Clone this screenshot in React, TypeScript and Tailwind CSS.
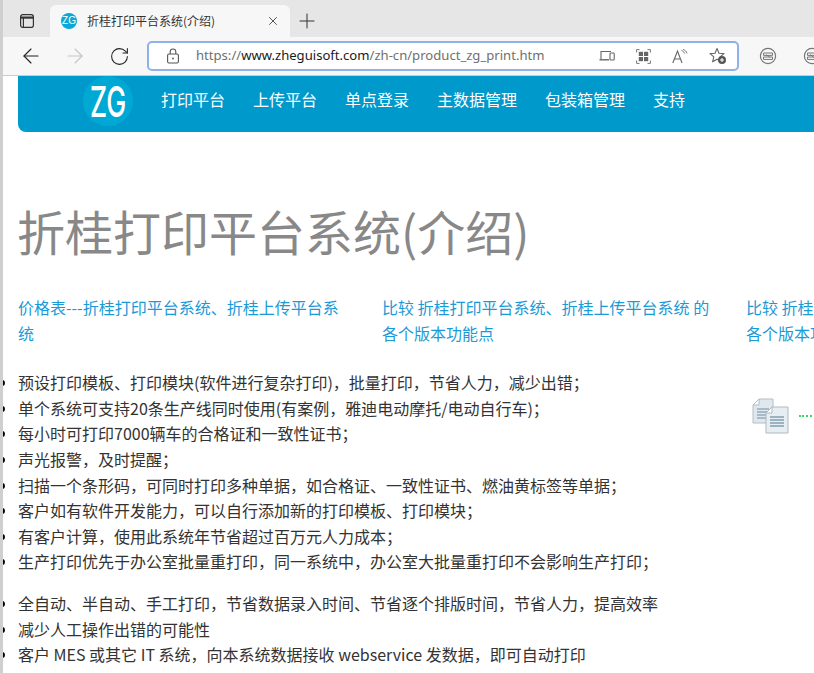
import React from 'react';
import { ArrowLeft, ArrowRight, RotateCw, X, Plus } from 'lucide-react';

const cjk = "font-['Noto_Sans_CJK_SC','Noto_Sans',sans-serif]";

const navItems = ['打印平台', '上传平台', '单点登录', '主数据管理', '包装箱管理', '支持'];

const columns = [
  '价格表---折桂打印平台系统、折桂上传平台系统',
  '比较 折桂打印平台系统、折桂上传平台系统 的各个版本功能点',
  '比较 折桂上传平台系统、折桂上传平台系统 的各个版本功能点',
];

const listOne = [
  '预设打印模板、打印模块(软件进行复杂打印)，批量打印，节省人力，减少出错；',
  '单个系统可支持20条生产线同时使用(有案例，雅迪电动摩托/电动自行车)；',
  '每小时可打印7000辆车的合格证和一致性证书；',
  '声光报警，及时提醒；',
  '扫描一个条形码，可同时打印多种单据，如合格证、一致性证书、燃油黄标签等单据；',
  '客户如有软件开发能力，可以自行添加新的打印模板、打印模块；',
  '有客户计算，使用此系统年节省超过百万元人力成本；',
  '生产打印优先于办公室批量重打印，同一系统中，办公室大批量重打印不会影响生产打印；',
];

const listTwo = [
  '全自动、半自动、手工打印，节省数据录入时间、节省逐个排版时间，节省人力，提高效率',
  '减少人工操作出错的可能性',
  '客户 MES 或其它 IT 系统，向本系统数据接收 webservice 发数据，即可自动打印',
];

const TabsIcon = () => (
  <svg width="16" height="16" viewBox="0 0 16 16" fill="none" stroke="#333" strokeWidth="1.2">
    <rect x="1.6" y="1.6" width="12.8" height="12.8" rx="2.2" />
    <path d="M1.6 4.6h12.8" strokeWidth="2.2" />
    <path d="M4.4 5v9.4" />
  </svg>
);

const LockIcon = () => (
  <svg width="14" height="16" viewBox="0 0 14 16" fill="none" stroke="#555" strokeWidth="1.1">
    <rect x="1.6" y="6" width="10.8" height="9" rx="1.4" />
    <path d="M4.2 6V3.8a2.8 2.8 0 0 1 5.6 0V6" />
    <circle cx="7" cy="10.5" r="0.9" fill="#555" stroke="none" />
  </svg>
);

const DeviceIcon = () => (
  <svg width="16" height="14" viewBox="0 0 16 14" fill="none" stroke="#666" strokeWidth="1.1">
    <path d="M2 10V2.5h10" />
    <path d="M0.5 10.8h9.5" strokeWidth="1.4" />
    <rect x="11" y="4" width="4.2" height="7" rx="0.8" />
  </svg>
);

const QrIcon = () => (
  <svg width="15" height="15" viewBox="0 0 15 15" fill="none" stroke="#777" strokeWidth="1">
    <path d="M.6 3.5V.6h2.9M11.5.6h2.9v2.9M14.4 11.5v2.9h-2.9M3.5 14.4H.6v-2.9" />
    <rect x="2.8" y="2.8" width="4.2" height="4.2" fill="#666" stroke="none" />
    <rect x="8" y="2.8" width="4.2" height="4.2" fill="#666" stroke="none" />
    <rect x="2.8" y="8" width="4.2" height="4.2" fill="#666" stroke="none" />
    <rect x="8" y="8" width="4.2" height="4.2" fill="#666" stroke="none" />
  </svg>
);

const ReadAloudIcon = () => (
  <svg width="16" height="15" viewBox="0 0 16 15" fill="none" stroke="#666" strokeWidth="1.1">
    <path d="M.8 14 5.5 2 10 14M2.4 10h6.2" />
    <path d="M9.5 1.5c1.6.5 2.6 1.6 3 3M11 .4c2 .6 3.4 2 4 4" strokeWidth="0.9" />
  </svg>
);

const FavAddIcon = () => (
  <svg width="18" height="18" viewBox="0 0 18 18" fill="none">
    <path d="M8 1.5 10 6.2l5 .4-3.8 3.3 1.2 4.9L8 12.2l-4.4 2.6 1.2-4.9L1 6.6l5-.4z" stroke="#666" strokeWidth="1.1" strokeLinejoin="round" />
    <circle cx="13" cy="13" r="4" fill="#555" />
    <path d="M13 11v4M11 13h4" stroke="#fff" strokeWidth="1.1" />
  </svg>
);

const ExtIcon = () => (
  <svg width="18" height="18" viewBox="0 0 18 18" fill="none" stroke="#777" strokeWidth="1.2">
    <circle cx="9" cy="9" r="7.6" />
    <path d="M4.5 6h9v2.4h-9zM4.5 10h9v2.4h-9z" strokeWidth="1" />
    <path d="M7 7.5 11 10.5" strokeWidth="0.8" />
  </svg>
);

const FilesIcon = () => (
  <svg width="38" height="36" viewBox="0 0 38 36">
    <path d="M7 1h14v24H1V7z" fill="#dfe8ee" stroke="#b4bec6" />
    <path d="M1 7h6V1z" fill="#fff" stroke="#b4bec6" />
    <path d="M5 11h12M5 14h12M5 17h12M5 20h12" stroke="#a8bac6" strokeWidth="1.8" />
    <path d="M20 9h16v26H14V15z" fill="#e6eef3" stroke="#aeb9c1" />
    <path d="M14 15h6V9z" fill="#fff" stroke="#aeb9c1" />
    <path d="M18 19h14M18 22h14M18 25h14M18 28h14" stroke="#9db2c0" strokeWidth="1.8" />
  </svg>
);

const App: React.FC = () => {
  return (
    <div className={`w-[814px] h-[673px] overflow-hidden bg-white border-l-[3px] border-[#cfcfcf] ${cjk}`}>
      <div className="h-[37px] bg-[#e6e6e6] flex items-end">
        <div className="w-[47px] h-[32px] flex items-center justify-center">
          <TabsIcon />
        </div>
        <div className="w-[240px] h-[32px] bg-[#f7f7f7] rounded-t-[6px] flex items-center pl-[11px] pr-[10px]">
          <div className="w-[16px] h-[16px] rounded-full bg-[#0aa8d6] flex items-center justify-center text-white text-[10px] leading-none font-['Liberation_Sans',sans-serif]">
            ZG
          </div>
          <span className="ml-[10px] text-[12px] text-[#333]">折桂打印平台系统(介绍)</span>
          <X className="ml-auto" size={14} strokeWidth={1.4} color="#333" />
        </div>
        <div className="w-[34px] h-[32px] flex items-center justify-center">
          <Plus size={24} strokeWidth={1} color="#333" />
        </div>
      </div>

      <div className="h-[39px] bg-[#f7f7f7] border-b border-[#cccccc] flex items-center">
        <div className="w-[144px] pl-[6px] flex items-center shrink-0">
          <div className="w-11 flex justify-center">
            <ArrowLeft size={24} strokeWidth={1.1} color="#222" />
          </div>
          <div className="w-11 flex justify-center">
            <ArrowRight size={24} strokeWidth={1.1} color="#c4c4c4" />
          </div>
          <div className="w-11 flex justify-center">
            <RotateCw size={21} strokeWidth={1.2} color="#222" />
          </div>
        </div>
        <div className="w-[592px] h-[30px] shrink-0 bg-white border-2 border-[#8fb1e9] rounded-[5px] flex items-center pl-[17px] pr-[10px]">
          <LockIcon />
          <span className="ml-[16px] text-[13.1px] text-[#6f6f6f] whitespace-nowrap font-['Noto_Sans',sans-serif]">
            https://<span className="text-[#1a1a1a]">www.zheguisoft.com</span>/zh-cn/product_zg_print.htm
          </span>
          <div className="ml-auto flex items-center gap-[21px]">
            <DeviceIcon />
            <QrIcon />
            <ReadAloudIcon />
            <FavAddIcon />
          </div>
        </div>
        <div className="flex items-center gap-[26px] pl-[20px] shrink-0">
          <ExtIcon />
          <ExtIcon />
        </div>
      </div>

      <div className="w-[1200px] pl-[15px]">
        <div className="h-[56px] bg-[#0099cc] rounded-bl-[8px] pl-[65px] flex items-start">
          <div className="w-[50px] h-[50px] rounded-full bg-[#00a9d4] flex items-center justify-center overflow-hidden">
            <span className="text-white text-[43px] leading-none font-medium scale-x-[0.62] font-['Inter',sans-serif]">ZG</span>
          </div>
          <nav className="ml-[28px] h-[46px] flex items-center gap-[28px] text-[16px] text-white">
            {navItems.map((item) => (
              <a key={item}>{item}</a>
            ))}
          </nav>
        </div>

        <h1 className="mt-[64px] -ml-[1px] text-[48px] leading-[68px] font-normal text-[#888888]">折桂打印平台系统(介绍)</h1>

        <div className="mt-[31px] flex">
          {columns.map((text) => (
            <p key={text} className="w-[364px] pr-[30px] shrink-0 text-[16px] leading-[25.6px] text-[#1a9ad6]">
              {text}
            </p>
          ))}
        </div>

        <div className="mt-[24px] flex">
          <div className="w-[728px] shrink-0">
            <ul className="list-disc text-[16px] leading-[25.6px] text-[#333] marker:text-black">
              {listOne.map((item) => (
                <li key={item}>{item}</li>
              ))}
            </ul>
            <ul className="mt-[16px] list-disc text-[16px] leading-[25.6px] text-[#333] marker:text-black">
              {listTwo.map((item) => (
                <li key={item}>{item}</li>
              ))}
            </ul>
          </div>
          <div className="pt-[28px] pl-[6px] flex items-center self-start">
            <FilesIcon />
            <div className="ml-[9px] w-[40px] border-t-2 border-dotted border-[#3ecf6e]" />
          </div>
        </div>
      </div>
    </div>
  );
};

export default App;
